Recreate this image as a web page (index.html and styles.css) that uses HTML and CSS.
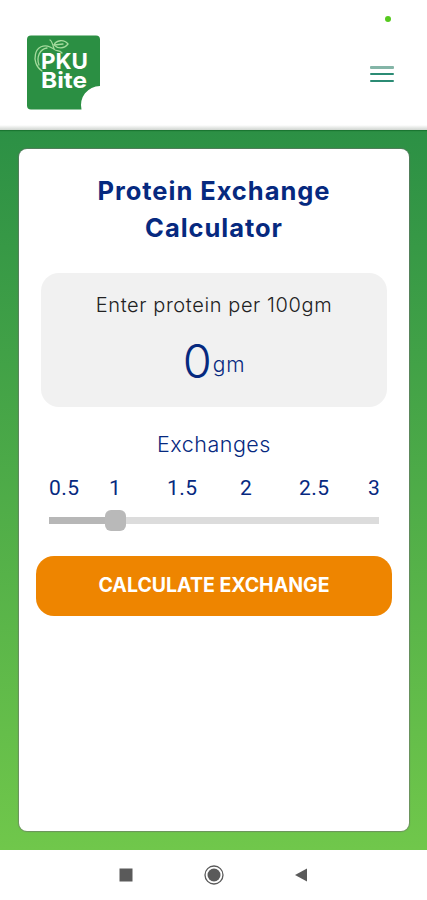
FILE: index.html
```html
<!DOCTYPE html>
<html lang="en">
<head>
    <meta charset="UTF-8">
    <title>Protein Exchange Calculator</title>
    <meta name="viewport" content="width=device-width, initial-scale=1">
    <link rel="stylesheet" href="styles.css">
</head>
<body>

<header class="header">
    <svg class="logo" width="74" height="75" viewBox="0 0 74 75">
        <path fill="#2b8f43" d="M4 0.500H69Q73 0.500 73 4.500V51A19 19 0 0 0 54.500 74.500H4Q0 74.500 0 70.500V4.500Q0 0.500 4 0.500Z"/>
        <!-- apple outline behind the name -->
        <g fill="none" stroke="#a5db9d" stroke-width="1.300" stroke-linecap="round">
            <path d="M15 36C9 32 7 25 8.500 19C10 12 17 9 23 12L27 14"/>
            <path d="M12 30C9 22 13 14 20 13"/>
            <path d="M23 5C25 6 26 10 27 14C29 17 32 14 35 18"/>
            <path d="M27 10C29 5 37 4 41 9C37 14 31 14 27 10L36 9"/>
        </g>
        <g class="logo_text">
            <text x="14" y="33.500" textLength="47" lengthAdjust="spacingAndGlyphs">PKU</text>
            <text x="14" y="53" textLength="46" lengthAdjust="spacingAndGlyphs">Bite</text>
        </g>
    </svg>
    <div class="menu">
        <span></span>
        <span></span>
        <span></span>
    </div>
    <i class="dot"></i>
</header>

<main class="content">
    <div class="card">
        <h1 class="title">Protein Exchange<br>Calculator</h1>

        <div class="protein">
            <label class="protein_label">Enter protein per 100gm</label>
            <div class="protein_value">
                <span class="number">0</span><span class="unit">gm</span>
            </div>
        </div>

        <h2 class="subtitle">Exchanges</h2>
        <div class="steps">
            <span>0.5</span>
            <span>1</span>
            <span>1.5</span>
            <span>2</span>
            <span>2.5</span>
            <span>3</span>
        </div>
        <input type="range" class="slider" min="0.5" max="3" step="0.5" value="1">

        <button class="btn_calc">CALCULATE EXCHANGE</button>
    </div>
</main>

<footer class="navbar">
    <svg width="20" height="20" viewBox="0 0 20 20"><rect x="3.500" y="3.500" width="13" height="13" fill="#5a5a5a"/></svg>
    <svg width="20" height="20" viewBox="0 0 20 20">
        <circle cx="10" cy="10" r="9" fill="none" stroke="#5a5a5a" stroke-width="1.300"/>
        <circle cx="10" cy="10" r="6.500" fill="#5a5a5a"/>
    </svg>
    <svg width="20" height="20" viewBox="0 0 20 20"><path d="M3 10L15 3.500V16.500Z" fill="#5a5a5a"/></svg>
</footer>

</body>
</html>
```
FILE: styles.css
```css
* {
    margin: 0;
    padding: 0;
    box-sizing: border-box;
}

body {
    height: 900px;
    display: flex;
    flex-direction: column;
    background: #fff;
    color: #06297f;
    font-family: Inter, "Liberation Sans", sans-serif;
}

.header {
    position: relative;
    z-index: 1;
    height: 130px;
    padding: 35px 33px 0 27px;
    display: flex;
    justify-content: space-between;
    align-items: flex-start;
    background: linear-gradient(#fff 125px, #d0d5d0);
    box-shadow: 0 1px 1px rgba(0, 80, 20, 0.4);
}

.logo_text {
    fill: #fff;
    font-size: 22px;
    font-weight: 700;
}

.menu {
    width: 24px;
    margin-top: 31px;
    display: flex;
    flex-direction: column;
    gap: 5px;
}

.menu span {
    height: 2px;
    border-radius: 1px;
    background: #2b8b74;
}

.menu span:first-child {
    height: 3px;
    margin-bottom: -1px;
    background: #84b5a7;
}

/* camera indicator over the header */
.dot {
    position: absolute;
    top: 16px;
    right: 36px;
    width: 6px;
    height: 6px;
    border-radius: 3px;
    background: #55c91e;
}

.content {
    flex: 1;
    padding: 19px 18px 19px 19px;
    background: linear-gradient(#2c9045, #70c74b);
}

.card {
    height: 682px;
    padding: 23px 17px 0;
    display: flex;
    flex-direction: column;
    border-radius: 8px;
    background: #fff;
    box-shadow: 0 0 1px 1px rgba(110, 110, 110, 0.6);
}

.title {
    text-align: center;
    font-size: 25.5px;
    font-weight: 700;
    line-height: 37px;
    letter-spacing: 0.95px;
}

.protein {
    height: 134px;
    margin: 27px 5px 0;
    padding-top: 20px;
    border-radius: 18px;
    background: #f1f1f1;
    text-align: center;
}

.protein_label {
    display: block;
    color: #222;
    font-size: 20px;
    font-weight: 300;
    line-height: 24px;
    letter-spacing: 0.6px;
}

.protein_value {
    display: flex;
    justify-content: center;
    align-items: flex-start;
    margin-top: 14px;
}

.number {
    font-size: 47px;
    font-weight: 350;
    line-height: 60px;
}

.unit {
    margin: 20px 0 0 1px;
    font-size: 21px;
    font-weight: 300;
    line-height: 28px;
    letter-spacing: 0.7px;
}

.subtitle {
    margin-top: 23px;
    text-align: center;
    font-size: 21.5px;
    font-weight: 350;
    line-height: 28px;
    letter-spacing: 0.5px;
}

.steps {
    margin: 17px 0 0 13px;
    display: grid;
    grid-template-columns: 60px 58px 73px 59px 69px 20px;
    font-family: Roboto, sans-serif;
    font-size: 21px;
    line-height: 26px;
    letter-spacing: 0.5px;
}

.slider {
    appearance: none;
    height: 21px;
    width: 330px;
    margin: 9px 0 0 13px;
    background: linear-gradient(to right, #b7b7b7 20%, #dcdcdc 20%) center / 100% 7px no-repeat;
}

.slider::-webkit-slider-thumb {
    appearance: none;
    width: 21px;
    height: 21px;
    margin-left: -6px;
    border-radius: 6px;
    background: #b9b9b9;
}

.btn_calc {
    height: 60px;
    margin-top: 25px;
    padding-bottom: 3px;
    border: none;
    border-radius: 18px;
    background: #ee8500;
    color: #fff;
    font-family: inherit;
    font-size: 19.5px;
    font-weight: 700;
}

.navbar {
    height: 50px;
    padding: 15px 115px 0 116px;
    display: flex;
    justify-content: space-between;
    background: #fff;
}
```
